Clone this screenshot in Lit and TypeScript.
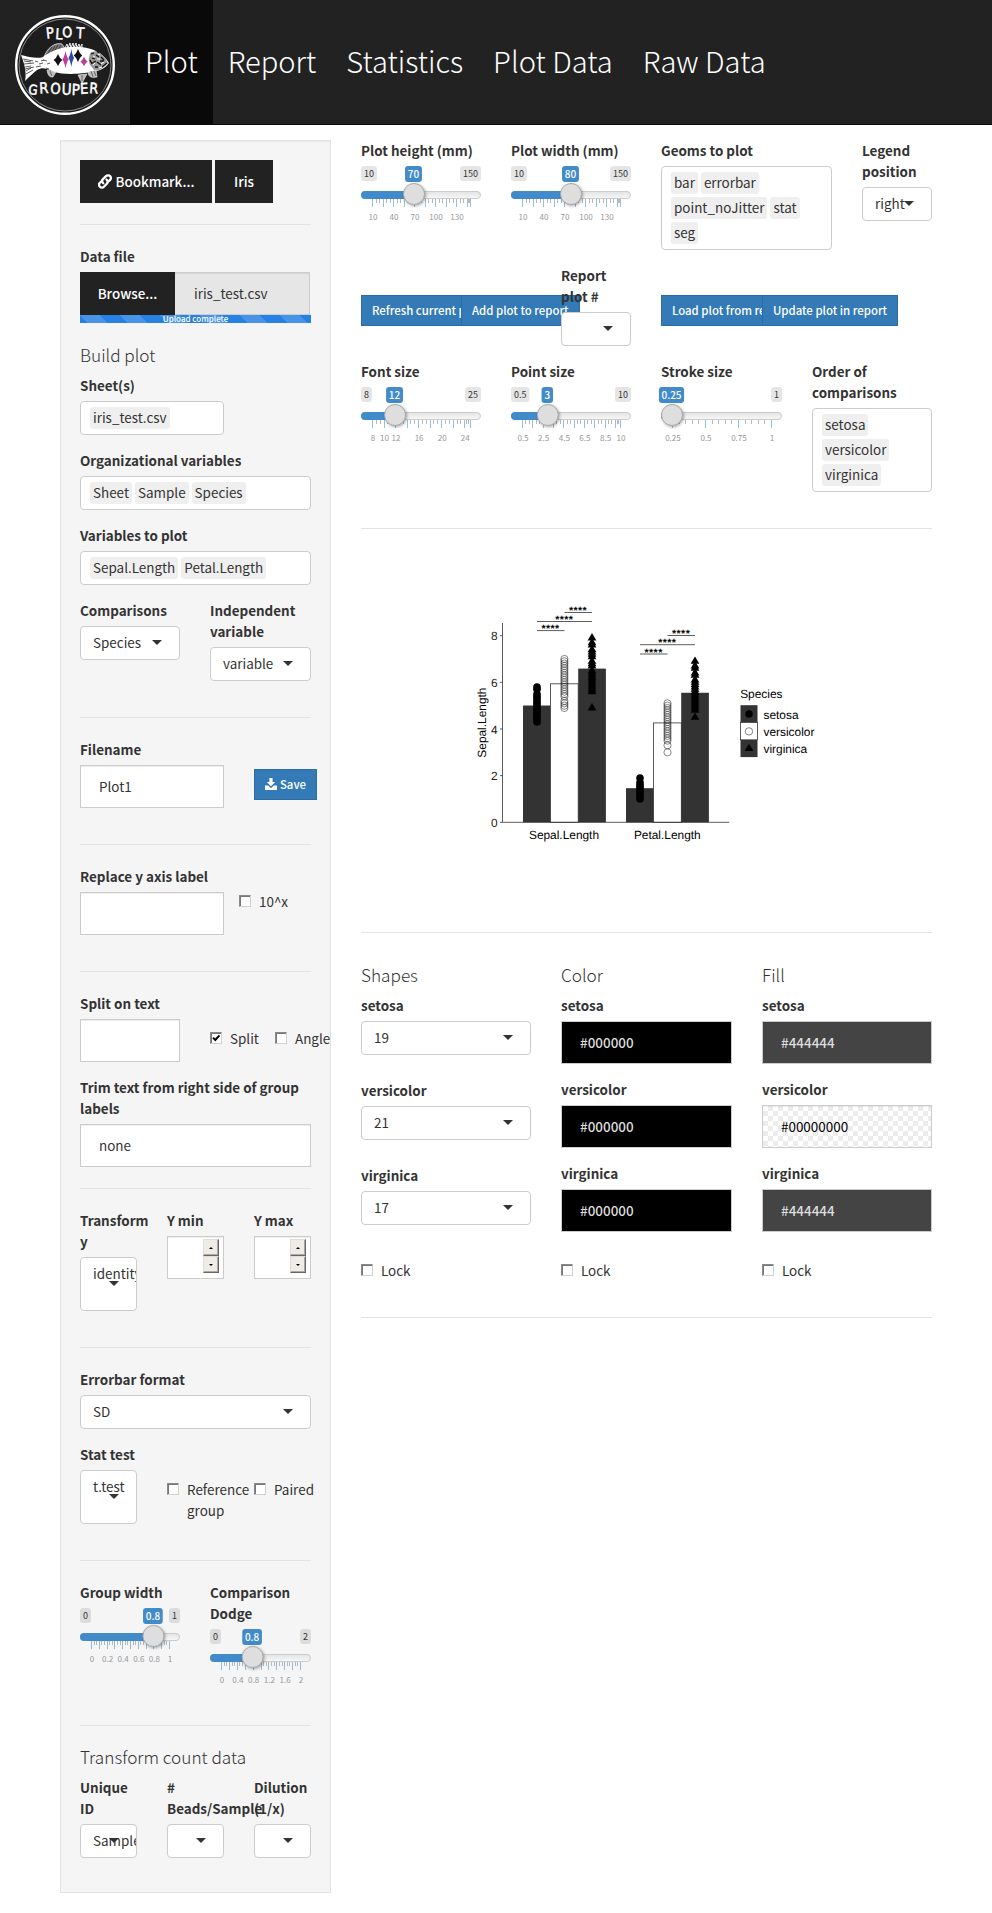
import { LitElement, html, svg, css } from "lit";
import { customElement, property } from "lit/decorators.js";

const SANS = css`"Noto Sans CJK SC", "Open Sans", sans-serif`;

const numWidth = (s: string, size: number) =>
  [...s].reduce((n, c) => n + (c === "." ? 0.25 : 0.497) * size, 0) + 6;

@customElement("range-slider")
class RangeSlider extends LitElement {
  @property({ type: Number }) min = 0;
  @property({ type: Number }) max = 1;
  @property({ type: Number }) value = 0;
  @property({ type: Number }) step = 1;
  @property({ type: Number }) width = 120;
  @property({ type: Number }) minors = 2;
  @property({ type: Boolean }) hidemin = false;
  @property({ type: Array }) marks: number[] = [];

  static styles = css`
    :host { display: block; height: 60px; }
    svg { display: block; overflow: visible; }
    text { font-family: ${SANS}; text-anchor: middle; }
    .edge { fill: #333; font-size: 9px; }
    .edge-box { fill: rgba(0, 0, 0, 0.1); }
    .from { fill: #fff; font-size: 10px; font-weight: 500; }
    .from-box, .bar { fill: #428bca; }
    .line { fill: url(#track); stroke: #ccc; }
    .major { stroke: #428bca; stroke-opacity: 0.55; }
    .minor { stroke: #b9b9b9; }
    .mark { fill: #98999c; font-size: 8.1px; }
    .knob { fill: #dedede; stroke: #aaa; filter: drop-shadow(1px 1px 1.5px rgba(0, 0, 0, 0.35)); }
  `;

  render() {
    const w = this.width;
    const at = (v: number) => 11 + ((v - this.min) / (this.max - this.min)) * (w - 22);
    const majors: number[] = [];
    for (let v = this.min; v < this.max - 1e-6; v += this.step) majors.push(v);
    majors.push(this.max);
    const small: number[] = [];
    for (let i = 1; i < majors.length; i++)
      for (let j = 1; j <= this.minors; j++)
        small.push(majors[i - 1] + ((majors[i] - majors[i - 1]) * j) / (this.minors + 1));
    const c = at(this.value);
    const minW = numWidth(String(this.min), 10);
    const maxW = numWidth(String(this.max), 10);
    const valW = numWidth(String(this.value), 11);
    return html`<svg width=${w} height="60">
      <defs><linearGradient id="track" x1="0" y1="0" x2="0" y2="1">
        <stop offset="0" stop-color="#e3e3e3"></stop><stop offset="1" stop-color="#f8f8f8"></stop>
      </linearGradient></defs>
      ${small.map((v) => svg`<path class="minor" d="M${Math.round(at(v)) + 0.5} 33v4"></path>`)}
      ${majors.map((v) => svg`<path class="major" d="M${Math.round(at(v)) + 0.5} 33v8"></path>`)}
      ${this.marks.map((v) => svg`<text class="mark" x=${at(v) + 1} y="54">${v}</text>`)}
      <rect class="line" x="0.5" y="25.5" width=${w - 1} height="7" rx="3.5"></rect>
      <path class="bar" d="M4 25H${c}V33H4A4 4 0 0 1 4 25Z"></path>
      ${this.hidemin ? null : svg`<rect class="edge-box" width=${minW} height="15" rx="3"></rect>
        <text class="edge" x=${minW / 2} y="11">${this.min}</text>`}
      <rect class="edge-box" x=${w - maxW} width=${maxW} height="15" rx="3"></rect>
      <text class="edge" x=${w - maxW / 2} y="11">${this.max}</text>
      <rect class="from-box" x=${c - valW / 2 - 0.5} width=${valW} height="16" rx="3"></rect>
      <text class="from" x=${c - 0.5} y="12">${this.value}</text>
      <circle class="knob" cx=${c} cy="28" r="10.5"></circle>
    </svg>`;
  }
}

const SETOSA_S = [4.3, 4.4, 4.5, 4.6, 4.7, 4.8, 4.9, 5.0, 5.1, 5.2, 5.3, 5.4, 5.5, 5.7, 5.8];
const VERSI_S = [4.9, 5.0, 5.1, 5.2, 5.4, 5.5, 5.6, 5.7, 5.8, 5.9, 6.0, 6.1, 6.2, 6.3, 6.4, 6.5, 6.6, 6.7, 6.8, 6.9, 7.0];
const VIRG_S = [4.9, 5.6, 5.7, 5.8, 5.9, 6.0, 6.1, 6.2, 6.3, 6.4, 6.5, 6.7, 6.8, 6.9, 7.1, 7.2, 7.3, 7.4, 7.6, 7.7, 7.9];
const SETOSA_P = [1.0, 1.1, 1.2, 1.3, 1.4, 1.5, 1.6, 1.7, 1.9];
const VERSI_P = [3.0, 3.3, 3.5, 3.6, 3.7, 3.8, 3.9, 4.0, 4.1, 4.2, 4.3, 4.4, 4.5, 4.6, 4.7, 4.8, 4.9, 5.0, 5.1];
const VIRG_P = [4.5, 4.8, 4.9, 5.0, 5.1, 5.2, 5.3, 5.4, 5.5, 5.6, 5.7, 5.8, 5.9, 6.0, 6.1, 6.3, 6.4, 6.6, 6.7, 6.9];

@customElement("species-plot")
class SpeciesPlot extends LitElement {
  static styles = css`
    :host { display: block; height: 403px; }
    svg { display: block; }
    text { font-family: "Liberation Sans", Arial, sans-serif; font-size: 11.9px; fill: #000; text-rendering: geometricPrecision; }
    .mid { text-anchor: middle; }
    .end { text-anchor: end; fill: #222; }
    .axis { stroke: #333; stroke-width: 0.8; fill: none; }
    .dark { fill: #333; }
    .light { fill: #fff; stroke: #333; stroke-width: 0.8; }
    .dot { fill: #000; }
    .ring { fill: #fff; stroke: #111; stroke-width: 0.5; }
    .clear { fill: none; stroke: #111; stroke-width: 0.5; }
    .stars { font-size: 10.6px; font-weight: 700; letter-spacing: 0.45px; text-anchor: middle; }
  `;

  render() {
    const y = (v: number) => 822.3 - v * 23.33;
    const bar = (x: number, v: number, cls: string) =>
      svg`<rect class=${cls} x=${x} y=${y(v)} width="27.7" height=${v * 23.33}></rect>`;
    const tri = (x: number, cy: number) =>
      svg`<path class="dot" d="M${x} ${cy - 4.9}l4.4 7.4h-8.8z"></path>`;
    const dots = (x: number, vs: number[]) => vs.map((v) => svg`<circle class="dot" cx=${x} cy=${y(v)} r="3.8"></circle>`);
    const rings = (x: number, vs: number[]) => vs.map((v) => svg`<circle class="clear" cx=${x} cy=${y(v)} r="3.6"></circle>`);
    const sig = (x1: number, x2: number, yy: number) => svg`
      <path class="axis" d="M${x1} ${yy}H${x2}"></path>
      <text class="stars" x=${(x1 + x2) / 2 - 0.2} y=${yy + 1.6}>****</text>`;
    const key = (i: number, name: string, cls: string, mark: unknown) => svg`
      <rect class=${cls} x="740.5" y=${705.2 + i * 17.3} width="17" height="17.3"></rect>${mark}
      <text x="763.5" y=${718.6 + i * 17.3}>${name}</text>`;
    return html`<svg width="571" height="403" viewBox="361 529 571 403">
      ${bar(523, 5.006, "dark")}${bar(550.5, 5.936, "light")}${bar(578.2, 6.588, "dark")}
      ${bar(626, 1.462, "dark")}${bar(653.6, 4.26, "light")}${bar(681.2, 5.552, "dark")}
      <path class="axis" d="M502.5 623V822.3H729.3"></path>
      ${[0, 2, 4, 6, 8].map((v) => svg`<path class="axis" d="M500 ${y(v)}h2.5"></path>
        <text class="end" x="497.6" y=${y(v) + 4.6}>${v}</text>`)}
      ${dots(537, SETOSA_S)}${rings(564.4, VERSI_S)}${VIRG_S.map((v) => tri(592, y(v)))}
      ${dots(640, SETOSA_P)}${rings(667.5, VERSI_P)}${VIRG_P.map((v) => tri(695, y(v)))}
      ${sig(537, 564.5, 630.6)}${sig(537, 592, 621.5)}${sig(564.5, 592, 612.5)}
      ${sig(640, 667.6, 654)}${sig(640, 695, 644.7)}${sig(667.6, 695, 635.5)}
      <text class="mid" x="564" y="838.6">Sepal.Length</text>
      <text class="mid" x="667.3" y="838.6">Petal.Length</text>
      <text class="mid" transform="translate(485.9 722.6) rotate(-90)">Sepal.Length</text>
      <text x="740.2" y="698.4">Species</text>
      ${key(0, "setosa", "dark", svg`<circle class="dot" cx="749" cy="714" r="3.7"></circle>`)}
      ${key(2, "virginica", "dark", tri(749, 748.6))}
      ${key(1, "versicolor", "light", svg`<circle class="ring" cx="749" cy="731.4" r="3.7"></circle>`)}
    </svg>`;
  }
}

@customElement("app-root")
class AppRoot extends LitElement {
  static styles = css`
    :host { display: block; width: 992px; height: 1913px; overflow: hidden; background: #fff; color: #333; font: 13.45px/21px ${SANS}; }
    * { box-sizing: border-box; }
    nav { height: 125px; display: flex; background: #222; border-bottom: 1px solid #090909; color: #fff; }
    .logo { width: 130px; height: 124px; display: block; }
    .logo text { font-family: "DejaVu Sans", sans-serif; fill: #fff; stroke: #fff; stroke-width: 0.5; }
    .tab { padding: 39px 15px 0; font-size: 29.1px; line-height: 42px; font-weight: 300; white-space: nowrap; }
    .tab.active { background: #090909; }
    main { display: flex; gap: 30px; padding: 15px 60px 0; }
    aside { width: 271px; height: 1753px; padding: 19px; border: 1px solid #e3e3e3; background: #f5f5f5; box-shadow: inset 0 1px 1px rgba(0, 0, 0, 0.05); }
    section { width: 571px; }
    hr { height: 1px; margin: 21px 0; border: 0; background: #e3e3e3; }
    h4 { margin: 0 0 10px; font-size: 17.2px; line-height: 20px; font-weight: 300; }
    label { display: block; margin-bottom: 5px; font-weight: 700; }
    .nowrap { white-space: nowrap; }
    .field { margin-bottom: 15px; min-width: 0; }
    .row { display: grid; }
    .halves { grid-template-columns: 100px 101px; gap: 30px; }
    .thirds { grid-template-columns: 57px 57px 57px; gap: 30px; }
    .wide-first { grid-template-columns: 144px 57px; gap: 30px; }
    .axis-row { grid-template-columns: 144px 72px; gap: 15px; }
    .split-row { grid-template-columns: 100px 35px 57px; gap: 30px; }
    .top { grid-template-columns: 120px 120px 171px 70px; gap: 30px; height: 125px; }
    .actions { grid-template-columns: 100px 100px 100px 101px 137px; height: 96px; }
    .sizes { grid-template-columns: 120px 120px 121px 120px; gap: 30px; height: 146px; }
    .aes { grid-template-columns: 170px 171px 170px; gap: 30px; margin-top: 32px; height: 331px; }
    .btn { display: inline-flex; align-items: center; justify-content: center; height: 43px; background: #222; color: #fff; font-weight: 500; white-space: nowrap; }
    .btns { display: flex; gap: 3px; }
    .bookmark { width: 132px; }
    .iris { width: 58px; }
    .btn svg { margin-right: 4px; }
    .file { display: flex; }
    .browse { width: 95px; }
    .file .input { width: 135px; padding-left: 19px; background: #e6e6e6; border-left: 0; }
    .progress { height: 8px; overflow: hidden; margin-bottom: 22px; color: #fff; font-size: 8px; line-height: 8px; font-weight: 500; text-align: center; background: linear-gradient(45deg, rgba(255,255,255,.15) 25%, transparent 25%, transparent 50%, rgba(255,255,255,.15) 50%, rgba(255,255,255,.15) 75%, transparent 75%) 0 0 / 40px 40px #2780e3; }
    .input { height: 43px; padding: 10px 18px; border: 1px solid #ccc; background: #fff; box-shadow: inset 0 1px 1px rgba(0, 0, 0, 0.075); white-space: nowrap; }
    .multi { min-height: 34px; padding: 5px 9px; border: 1px solid #ccc; border-radius: 4px; background: #fff; display: flex; flex-wrap: wrap; gap: 3px; }
    .tag { height: 22px; padding: 0 3px; border-radius: 3px; background: #efefef; }
    .narrow { width: 144px; }
    .select { position: relative; height: 34px; padding: 5px 12px; border: 1px solid #ccc; border-radius: 4px; background: #fff; overflow: hidden; white-space: nowrap; }
    .select.tall { height: 54px; }
    .select::after { content: ""; position: absolute; right: 17px; top: 50%; margin-top: -3px; border: 5px solid transparent; border-top-color: #333; border-bottom: 0; }
    .small { justify-content: flex-start; height: 31px; padding: 0 10px 1px; background: #337ab7; border: 1px solid #2e6da4; font-size: 11.4px; }
    .save { width: 63px; margin-top: 30px; }
    .save svg { margin-right: 3px; }
    .actions .small { margin-top: 30px; width: max-content; }
    .report { width: 70px; position: relative; }
    .check { display: flex; gap: 8px; }
    .box { flex: none; width: 12px; height: 12px; margin-top: 4px; background: #fff; border: 1px solid; border-color: #8a8a8a #d0d0d0 #d0d0d0 #8a8a8a; box-shadow: inset 1px 1px 0 #777; }
    .box svg { display: block; }
    .spin { padding: 2px 4px 0 0; display: flex; flex-direction: column; align-items: flex-end; }
    .arrow { display: flex; align-items: center; justify-content: center; width: 16px; height: 17px; background: #efebe7; border: 1px solid; border-color: #ddd #666 #666 #ddd; box-shadow: inset -1px -1px 0 #aca8a4; }
    .arrow i { border: 2px solid transparent; border-top: 0; border-bottom-color: #000; }
    .arrow + .arrow i { border: 2px solid transparent; border-bottom: 0; border-top-color: #000; }
    .shape { margin-bottom: 25px; }
    .color { color: #ddd; background: #000; font-weight: 500; }
    .color.grey { background: #444; }
    .color.none { color: #000; font-weight: 400; background: repeating-conic-gradient(#ececec 0 25%, #fff 0 50%) 0 0 / 10px 10px; }
    .lock { padding-top: 13px; }
    .lock.first { padding-top: 10px; }
    .pad36 { padding-top: 35px; }
    .pad26 { padding-top: 25px; }
  `;

  tags(items: string[], cls = "") {
    return html`<div class="multi ${cls}">${items.map((t) => html`<span class="tag">${t}</span>`)}</div>`;
  }
  select(text: string, cls = "") {
    return html`<div class="select ${cls}">${text}</div>`;
  }
  check(text: string, on = false) {
    return html`<div class="check"><span class="box">${on
      ? html`<svg width="10" height="10"><path d="M2 4.6L4.3 7L8.4 2.4" fill="none" stroke="#000" stroke-width="2"></path></svg>`
      : null}</span><span>${text}</span></div>`;
  }
  spinner() {
    return html`<div class="input spin"><span class="arrow"><i></i></span><span class="arrow"><i></i></span></div>`;
  }
  logo() {
    const letter = (c: string, x: number, y: number, r: number, s: number) =>
      svg`<text transform="translate(${x} ${y}) rotate(${r}) scale(0.88 1)" font-size=${s}>${c}</text>`;
    const diamond = (x: number, y: number, w: number, h: number, f: string) =>
      svg`<path d="M${x} ${y - h}Q${x + w * 0.35} ${y - h * 0.3} ${x + w} ${y}Q${x + w * 0.35} ${y + h * 0.3} ${x} ${y + h}Q${x - w * 0.35} ${y + h * 0.3} ${x - w} ${y}Q${x - w * 0.35} ${y - h * 0.3} ${x} ${y - h}Z" fill=${f}></path>`;
    return html`<svg class="logo" viewBox="0 0 130 124">
      <circle cx="65" cy="65" r="48.8" fill="#1d1d1d" stroke="#fff" stroke-width="2.4"></circle>
      <circle cx="65" cy="65" r="46" fill="none" stroke="#ccc" stroke-width="0.6"></circle>
      ${letter("P", 46.5, 38.5, -6, 15)}${letter("L", 55, 39, 4, 15)}${letter("O", 62.5, 37.5, -3, 14.5)}${letter("T", 76, 38, 3, 15)}
      ${letter("G", 28, 94, 6, 13.5)}${letter("R", 39.5, 93.5, -3, 15)}${letter("O", 50, 93.5, 4, 15)}${letter("U", 61.5, 94.5, 2, 15.5)}${letter("P", 71.5, 95, 2, 15.5)}${letter("E", 80.3, 94, -3, 15)}${letter("R", 89, 93, 4, 14.5)}
      <path d="M44 57C47 48 55 42 62 44L66 50L50 56Z" fill="#777" stroke="#ddd" stroke-width="0.8"></path>
      <path d="M47 55l5-8M50 55l5-9M53 54l5-9M57 52l4-7" stroke="#222" stroke-width="0.7"></path>
      <path d="M65 48l2-4 1 4 2-5 1 5 2-5 1 5 2-5 1 5 2-4 1 4 2-4v5" fill="none" stroke="#eee" stroke-width="1"></path>
      <path d="M21 55C29 57 37 59 43 57C53 49 66 46 80 47C93 48 103 53 109 63C105 69 97 72 90 72C83 74 64 75 54 72C49 70 44 66 37 70C33 73 29 77 25 81C27 72 24 63 21 55Z" fill="#fff"></path>
      <path d="M23 59l10 2M24 64l10-1M25 69l9-2M26 74l7-4M35 61l3 1M39 64l4-1M36 67l5-1M43 60l4 1M47 64l3-1M24 61l7 1M25 67l6-1M26 71l5-3M41 61l3-1M46 68l3 1" stroke="#333" stroke-width="0.8"></path>
      <path d="M91 52q-4 7-1 13l5 6q7-1 13-8q-4-8-11-12z" fill="#999"></path>
      <path d="M91 54l3-1M92 58l3 1M96 55l3 2M92 63l4-2M97 62l4 3M95 67l3 0M101 57l3 3M100 61l4 0M102 67l5-4M90 60l2 4M97 51l2 2" stroke="#111" stroke-width="1.3"></path>
      <path d="M93 56l2 1M97 59l3 0M93 65l2-2M101 64l3-2M99 68l3-1M98 54l2 1" stroke="#fff" stroke-width="1"></path>
      <path d="M47 70q1 8 6 7l3-5zM78 75l4 8 5-9zM88 72q0 7 9 5l-1-7z" fill="#bbb" stroke="#eee" stroke-width="0.6"></path>
      <path d="M50 71l2 5M82 75v6M91 71l2 6M94 71l2 5" stroke="#333" stroke-width="0.6"></path>
      ${diamond(58, 60, 4.4, 6, "#111")}${diamond(65.5, 59.5, 3.2, 8.5, "#c23a9c")}${diamond(71.3, 58, 2.8, 9, "#2c4aa8")}${diamond(78, 55.5, 4.2, 6.5, "#111")}${diamond(84, 61.5, 3.6, 4.8, "#c23a9c")}
    </svg>`;
  }

  render() {
    const mm = [10, 40, 70, 100, 130];
    const species = ["setosa", "versicolor", "virginica"];
    return html`
      <nav>
        ${this.logo()}
        <div class="tab active">Plot</div><div class="tab">Report</div><div class="tab">Statistics</div><div class="tab">Plot Data</div><div class="tab">Raw Data</div>
      </nav>
      <main>
        <aside>
          <div class="btns">
            <span class="btn bookmark"><svg width="14" height="15" viewBox="0 0 14 15" fill="none" stroke="#fff" stroke-width="2.3" stroke-linecap="round"><path d="M5.2 9.3C3.8 7.9 3.9 6.2 5 5.1L8 2.2C9.3 1 11.2 1.1 12.2 2.3C13.1 3.4 13 5 11.9 6.1L10.7 7.3"></path><path d="M8.6 5.6C9.9 6.9 9.8 8.7 8.8 9.8L5.9 12.7C4.7 13.9 2.9 13.8 1.9 12.7C.8 11.6 .9 9.9 1.9 8.8L3 7.7"></path></svg>Bookmark...</span>
            <span class="btn iris">Iris</span>
          </div>
          <hr>
          <label>Data file</label>
          <div class="file"><span class="btn browse">Browse...</span><div class="input">iris_test.csv</div></div>
          <div class="progress">Upload complete</div>
          <h4>Build plot</h4>
          <div class="field"><label>Sheet(s)</label>${this.tags(["iris_test.csv"], "narrow")}</div>
          <div class="field"><label>Organizational variables</label>${this.tags(["Sheet", "Sample", "Species"])}</div>
          <div class="field"><label>Variables to plot</label>${this.tags(["Sepal.Length", "Petal.Length"])}</div>
          <div class="row halves">
            <div class="field"><label>Comparisons</label>${this.select("Species")}</div>
            <div class="field"><label>Independent variable</label>${this.select("variable")}</div>
          </div>
          <hr>
          <div class="row wide-first">
            <div class="field"><label>Filename</label><div class="input">Plot1</div></div>
            <span class="btn small save"><svg width="12" height="12" viewBox="0 0 12 12" fill="#fff"><path d="M4.4 0h3.2v4h2.7L6 8.3 1.7 4h2.7zM0 7.6h3.2L6 10.2 8.8 7.6H12V12H0z"></path></svg>Save</span>
          </div>
          <hr>
          <div class="row axis-row">
            <div class="field"><label>Replace y axis label</label><div class="input"></div></div>
            <div class="pad26">${this.check("10^x")}</div>
          </div>
          <hr>
          <div class="row split-row">
            <div class="field"><label class="nowrap">Split on text</label><div class="input"></div></div>
            <div class="pad36">${this.check("Split", true)}</div>
            <div class="pad36">${this.check("Angle")}</div>
          </div>
          <label>Trim text from right side of group labels</label>
          <div class="input">none</div>
          <hr>
          <div class="row thirds">
            <div class="field"><label>Transform y</label>${this.select("identity", "tall")}</div>
            <div class="field"><label>Y min</label>${this.spinner()}</div>
            <div class="field"><label>Y max</label>${this.spinner()}</div>
          </div>
          <hr>
          <div class="field"><label>Errorbar format</label>${this.select("SD")}</div>
          <div class="row thirds">
            <div class="field"><label class="nowrap">Stat test</label>${this.select("t.test", "tall")}</div>
            <div class="pad36">${this.check("Reference group")}</div>
            <div class="pad36">${this.check("Paired")}</div>
          </div>
          <hr>
          <div class="row halves">
            <div class="field"><label>Group width</label>
              <range-slider min="0" max="1" value="0.8" step="0.1" width="100" .marks=${[0, 0.2, 0.4, 0.6, 0.8, 1]}></range-slider></div>
            <div class="field"><label>Comparison Dodge</label>
              <range-slider min="0" max="2" value="0.8" step="0.2" width="101" .marks=${[0, 0.4, 0.8, 1.2, 1.6, 2]}></range-slider></div>
          </div>
          <hr>
          <h4>Transform count data</h4>
          <div class="row thirds">
            <div class="field"><label>Unique ID</label>${this.select("Sample")}</div>
            <div class="field"><label># Beads/Sample</label>${this.select("")}</div>
            <div class="field"><label>Dilution (1/x)</label>${this.select("")}</div>
          </div>
        </aside>
        <section>
          <div class="row top">
            <div><label class="nowrap">Plot height (mm)</label><range-slider min="10" max="150" value="70" step="15" .marks=${mm}></range-slider></div>
            <div><label class="nowrap">Plot width (mm)</label><range-slider min="10" max="150" value="80" step="15" .marks=${mm}></range-slider></div>
            <div><label>Geoms to plot</label>${this.tags(["bar", "errorbar", "point_noJitter", "stat", "seg"])}</div>
            <div><label>Legend position</label>${this.select("right")}</div>
          </div>
          <div class="row actions">
            <span class="btn small">Refresh current plot</span>
            <span class="btn small">Add plot to report</span>
            <div class="report"><label>Report plot #</label>${this.select("")}</div>
            <span class="btn small">Load plot from report</span>
            <span class="btn small">Update plot in report</span>
          </div>
          <div class="row sizes">
            <div><label>Font size</label><range-slider min="8" max="25" value="12" step="2" .marks=${[8, 10, 12, 16, 20, 24]}></range-slider></div>
            <div><label>Point size</label><range-slider min="0.5" max="10" value="3" step="1" .marks=${[0.5, 2.5, 4.5, 6.5, 8.5, 10]}></range-slider></div>
            <div><label>Stroke size</label><range-slider min="0.25" max="1" value="0.25" step="0.25" width="121" minors="4" hidemin .marks=${[0.25, 0.5, 0.75, 1]}></range-slider></div>
            <div><label>Order of comparisons</label>${this.tags(species)}</div>
          </div>
          <hr style="margin-bottom:0">
          <species-plot></species-plot>
          <hr style="margin:0">
          <div class="row aes">
            <div><h4>Shapes</h4>
              ${["19", "21", "17"].map((s, i) => html`<div class="field shape"><label>${species[i]}</label>${this.select(s)}</div>`)}
              <div class="lock first">${this.check("Lock")}</div></div>
            <div><h4>Color</h4>
              ${species.map((s) => html`<div class="field"><label>${s}</label><div class="input color">#000000</div></div>`)}
              <div class="lock">${this.check("Lock")}</div></div>
            <div><h4>Fill</h4>
              ${species.map((s, i) => html`<div class="field"><label>${s}</label><div class="input color ${i === 1 ? "none" : "grey"}">${i === 1 ? "#00000000" : "#444444"}</div></div>`)}
              <div class="lock">${this.check("Lock")}</div></div>
          </div>
          <hr>
        </section>
      </main>`;
  }
}
